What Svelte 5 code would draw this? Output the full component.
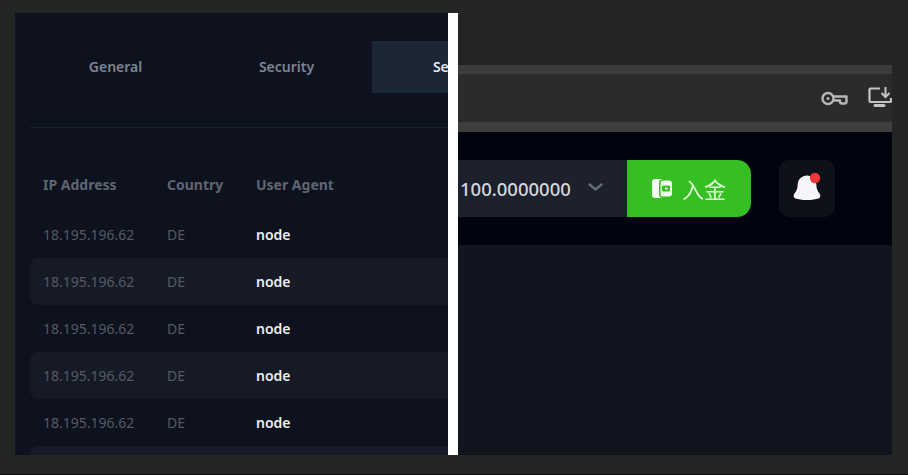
<script>
  const tabs = ["General", "Security", "Sessions"];
  const rows = Array(6).fill({ ip: "18.195.196.62", country: "DE", agent: "node" });
</script>

<div class="page">
  <section class="left">
    <div class="tabs">
      {#each tabs as tab, i}
        <div class="tab" class:active={i === 2}>{tab}</div>
      {/each}
    </div>
    <div class="table">
      <div class="row head">
        <span class="ip">IP Address</span>
        <span class="country">Country</span>
        <span>User Agent</span>
      </div>
      {#each rows as row}
        <div class="row">
          <span class="ip">{row.ip}</span>
          <span class="country">{row.country}</span>
          <span class="agent">{row.agent}</span>
        </div>
      {/each}
    </div>
  </section>

  <div class="divider"></div>

  <section class="right">
    <div class="chrome-top"></div>
    <div class="address">
      <svg class="key" width="27" height="15" viewBox="0 0 27 15" fill="none" stroke="#b8b8b8" stroke-width="2.400">
        <circle cx="7" cy="7.500" r="5.500" />
        <circle cx="7" cy="7.500" r="1.500" fill="#b8b8b8" stroke="none" />
        <path d="M12.500 5.500H25.500V10.500a2 2 0 0 1-2 2H21a2 2 0 0 1-2-2V9.500H13" stroke-linejoin="round" />
      </svg>
      <svg class="install" width="24" height="21" viewBox="0 0 24 21" fill="none" stroke="#c4c4c4" stroke-width="2.200">
        <path d="M12 1.500H2.500a1 1 0 0 0-1 1V14a1 1 0 0 0 1 1H22a1 1 0 0 0 1-1v-3" />
        <path d="M7 18.500h9" stroke-width="3" stroke-linecap="round" />
        <path d="M17.500 0v9M13.500 6l4 4 4-4" stroke-width="2" />
      </svg>
    </div>
    <div class="header">
      <div class="balance">
        <span class="amount">100.0000000</span>
        <svg class="chevron" width="15" height="8" viewBox="0 0 15 8" fill="none" stroke="#646a76" stroke-width="2.400" stroke-linecap="round" stroke-linejoin="round">
          <path d="M1.500 1.500 7.500 6.500l6-5" />
        </svg>
      </div>
      <button class="deposit">
        <svg width="20" height="19" viewBox="0 0 20 19">
          <path fill="#f1faee" d="M3 0h8a4 4 0 0 0-4 4v11a4 4 0 0 0 4 4H3a3 3 0 0 1-3-3V3a3 3 0 0 1 3-3z" />
          <path fill="#f1faee" fill-rule="evenodd" d="M11 1.500h6a3 3 0 0 1 3 3v10a3 3 0 0 1-3 3h-6a2.500 2.500 0 0 1-2.500-2.500V4a2.500 2.500 0 0 1 2.500-2.500zm.5 5a1.500 1.500 0 0 0-1.500 1.500v3a1.500 1.500 0 0 0 1.500 1.500h5a1.500 1.500 0 0 0 1.500-1.500V8a1.500 1.500 0 0 0-1.500-1.500zm1.500 2h2.500v2H13z" />
        </svg>
        <span>入金</span>
      </button>
      <div class="bell">
        <svg width="30" height="32" viewBox="0 0 30 32">
          <path fill="#f7f5fb" d="M15 3.500c5 0 9 3.500 9.300 9 .2 4 1 6.500 3.200 9 1.500 1.700 1 4.300-1 5-2.500.9-6.500 1.500-11.500 1.500S6 27.400 3.500 26.500c-2-.7-2.500-3.300-1-5 2.200-2.500 3-5 3.200-9 .3-5.500 4.300-9 9.300-9z" />
          <circle cx="23" cy="6" r="5.200" fill="#f0353b" />
        </svg>
      </div>
    </div>
    <div class="content"></div>
  </section>
</div>

<style>
  :global(body) {
    margin: 0;
    background: #232624;
  }

  .page {
    display: flex;
    height: 442px;
    width: 877px;
    padding: 13px 16px 19px 15px;
    border-bottom: 1px solid #0b0c0c;
    font-family: "Noto Sans", sans-serif;
    filter: blur(0.6px);
    overflow: hidden;
  }

  .left {
    width: 433px;
    flex: none;
    background: #0d121e;
    overflow: hidden;
  }

  .tabs {
    display: flex;
    margin: 28px 0 0 15px;
    width: 530px;
    height: 52px;
  }

  .tab {
    width: 171px;
    flex: none;
    box-sizing: border-box;
    padding-bottom: 2px;
    display: flex;
    align-items: center;
    justify-content: center;
    font-size: 14px;
    font-weight: 600;
    color: #7d8493;
  }

  .tab.active {
    background: #1c2735;
    color: #e4e8ee;
    width: 180px;
  }

  .table {
    margin: 34px 0 0 15px;
    padding-top: 34px;
    border-top: 1px solid #1a2130;
    width: 460px;
  }

  .row {
    display: flex;
    align-items: center;
    height: 47px;
    box-sizing: border-box;
    padding-left: 13px;
    padding-bottom: 1px;
    font-size: 14px;
    border-radius: 8px;
    color: #555a65;
  }

  .row:nth-child(odd) {
    background: #151a26;
  }

  .row.head {
    height: 49px;
    padding-bottom: 5px;
    font-weight: 700;
    color: #5f6573;
    background: none;
  }

  .ip {
    width: 124px;
    flex: none;
  }

  .country {
    width: 89px;
    flex: none;
  }

  .agent {
    color: #eceef2;
    font-weight: 600;
  }

  .divider {
    width: 10px;
    flex: none;
    background: #fff;
  }

  .right {
    width: 434px;
    flex: none;
    display: flex;
    flex-direction: column;
    overflow: hidden;
  }

  .chrome-top {
    height: 52px;
    flex: none;
    background: #232423;
    border-bottom: 9px solid #3c3c3c;
  }

  .address {
    height: 48px;
    flex: none;
    background: #2b2b2b;
    border-bottom: 10px solid #3e3e3e;
    display: flex;
    align-items: center;
    justify-content: flex-end;
  }

  .key {
    margin-right: 20px;
    margin-top: 1px;
  }

  .install {
    margin-bottom: 1px;
  }

  .header {
    height: 113px;
    flex: none;
    background: #01040f;
    display: flex;
    align-items: center;
    padding-bottom: 1px;
    box-sizing: border-box;
  }

  .balance {
    width: 169px;
    height: 57px;
    flex: none;
    box-sizing: border-box;
    background: #1d212d;
    display: flex;
    align-items: center;
    padding-left: 2px;
    gap: 17px;
  }

  .amount {
    font-size: 18.500px;
    font-weight: 500;
    color: #d5d7dc;
  }

  .chevron {
    margin-bottom: 3px;
  }

  .deposit {
    width: 124px;
    height: 57px;
    flex: none;
    border: none;
    border-radius: 0 14px 14px 0;
    background: #35bf22;
    display: flex;
    align-items: center;
    justify-content: center;
    gap: 10px;
    padding: 0;
    color: #dff7d6;
    font-family: "Noto Sans CJK SC", sans-serif;
    font-size: 22px;
  }

  .bell {
    width: 56px;
    height: 57px;
    flex: none;
    margin-left: 28px;
    border-radius: 10px;
    background: #0e111a;
    display: flex;
    align-items: center;
    justify-content: center;
  }

  .content {
    flex: 1;
    background: #11151f;
  }
</style>
